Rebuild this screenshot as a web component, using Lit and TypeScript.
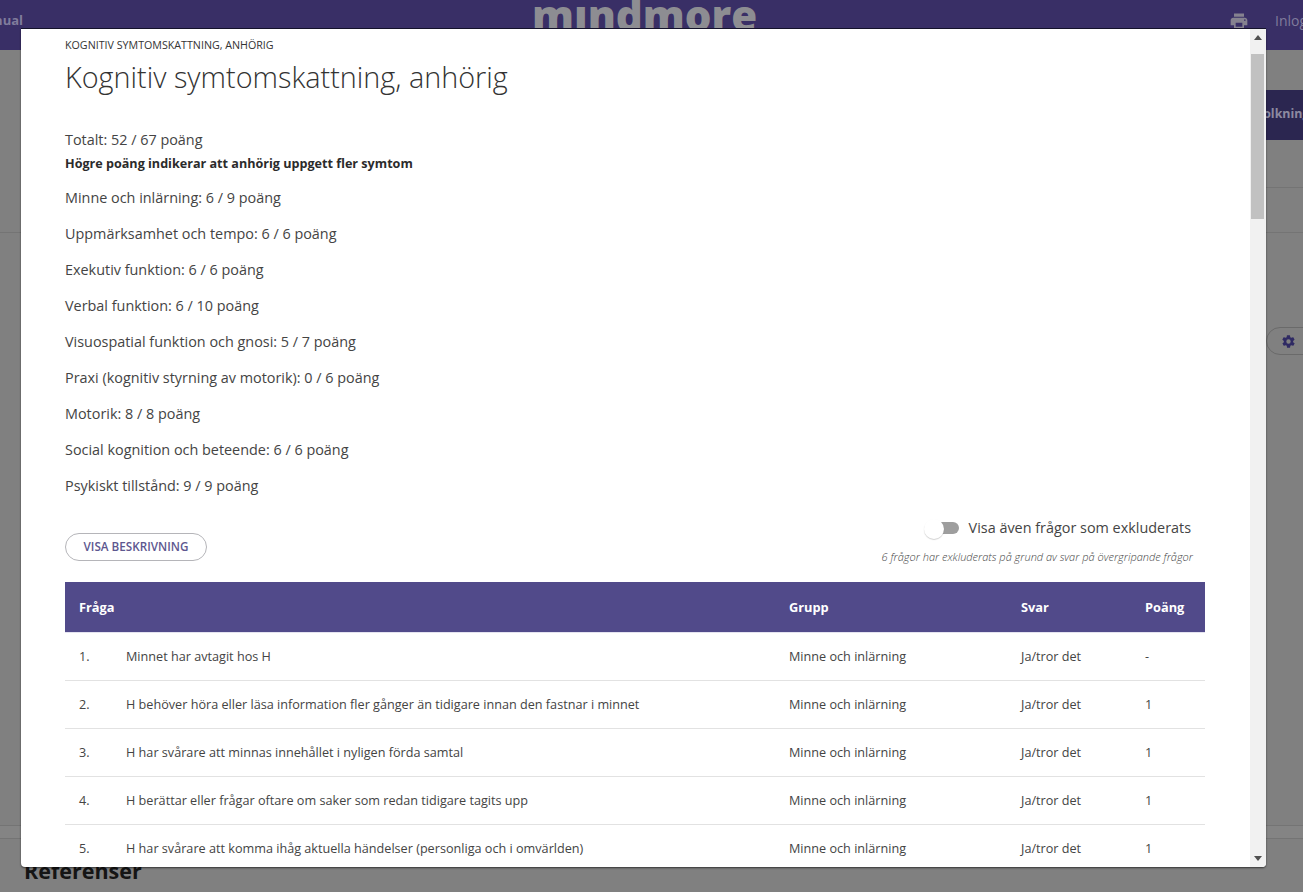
import { LitElement, html, css } from "lit";
import { customElement } from "lit/decorators.js";

const scores = [
  "Minne och inlärning: 6 / 9 poäng",
  "Uppmärksamhet och tempo: 6 / 6 poäng",
  "Exekutiv funktion: 6 / 6 poäng",
  "Verbal funktion: 6 / 10 poäng",
  "Visuospatial funktion och gnosi: 5 / 7 poäng",
  "Praxi (kognitiv styrning av motorik): 0 / 6 poäng",
  "Motorik: 8 / 8 poäng",
  "Social kognition och beteende: 6 / 6 poäng",
  "Psykiskt tillstånd: 9 / 9 poäng",
];
const rows = [
  ["1.", "Minnet har avtagit hos H", "-"],
  ["2.", "H behöver höra eller läsa information fler gånger än tidigare innan den fastnar i minnet", "1"],
  ["3.", "H har svårare att minnas innehållet i nyligen förda samtal", "1"],
  ["4.", "H berättar eller frågar oftare om saker som redan tidigare tagits upp", "1"],
  ["5.", "H har svårare att komma ihåg aktuella händelser (personliga och i omvärlden)", "1"],
];

@customElement("app-root")
export class AppRoot extends LitElement {
  static styles = css`
    :host { display: block; position: relative; height: 892px; overflow: hidden; background: #808080; font-family: "Open Sans", sans-serif; color: #333; }
    .page { height: 892px; display: flex; flex-direction: column; overflow: hidden; }
    .hdr { height: 50px; flex: none; background: #392f66; display: flex; align-items: flex-start; justify-content: space-between; color: #807c9c; position: relative; overflow: hidden; }
    .manual { font-size: 13px; font-weight: 700; line-height: 40px; margin-left: -26px; }
    .logo { position: absolute; left: 532px; top: -17px; font-weight: 800; font-size: 42px; line-height: 64px; color: #8d8d92; }
    .hdr-right { display: flex; align-items: flex-start; margin-right: -12px; }
    .printer { margin: 11px 26px 0 0; }
    .login { font-size: 14px; line-height: 42px; width: 40px; white-space: nowrap; }
    .band1 { height: 40px; flex: none; }
    .tabs { height: 51px; flex: none; display: flex; justify-content: flex-end; }
    .active { width: 47px; height: 50px; background: #2b2650; color: #8d8aa0; font-size: 12.4px; font-weight: 700; line-height: 48px; white-space: nowrap; overflow: hidden; box-sizing: border-box; }
    .band2 { height: 47px; flex: none; display: flex; justify-content: flex-end; }
    .rule { width: 47px; border-bottom: 1px solid #747474; }
    .band3 { height: 44px; flex: none; border-bottom: 1px solid #747474; }
    .gear-row { height: 122px; flex: none; display: flex; align-items: flex-end; justify-content: flex-end; }
    .gear { width: 60px; height: 28px; margin-right: -23px; border: 1px solid #6a6a6a; border-radius: 14px; display: flex; align-items: center; padding-left: 14px; box-sizing: border-box; }
    .fill { flex: 1; border-bottom: 1px solid #747474; }
    .band4 { height: 12px; flex: none; border-bottom: 1px solid #747474; background: #848484; }
    .refs { flex: none; font-size: 21.5px; font-weight: 700; color: #151515; line-height: 30px; padding: 17px 0 6px 24px; }

    .modal { position: absolute; left: 21px; top: 29px; width: 1245px; height: 838px; background: #fff; display: flex; border-radius: 0 0 4px 4px; box-shadow: 0 -1px 0 #14122a, 0 1px 2px rgba(0,0,0,.6); overflow: hidden; }
    .content { flex: 1; min-width: 0; overflow: hidden; padding: 8px 45px 0 44px; }
    .eyebrow { font-size: 10.7px; line-height: 16px; text-transform: uppercase; color: #333; }
    h1 { margin: 2px 0 0; font-size: 28.8px; font-weight: 300; line-height: 44px; color: #333; }
    .summary { margin-top: 31px; font-size: 14.4px; line-height: 20px; color: #444; }
    .note { font-size: 12.6px; font-weight: 700; line-height: 20px; margin-top: 4px; color: #2b2b2b; }
    .score { margin-top: 16px; }
    .note + .score { margin-top: 14px; }
    .actions { display: flex; justify-content: space-between; align-items: flex-end; margin-top: 22px; }
    .pill { width: 142px; height: 28px; box-sizing: border-box; border: 1px solid #b5b5b9; border-radius: 14px; background: #fff; color: #5d578f; font: 600 11.7px/25px "Open Sans", sans-serif; text-transform: uppercase; padding: 0 0 1px; margin-bottom: 4px; }
    .opts { display: flex; flex-direction: column; align-items: flex-end; }
    .toggle-row { display: flex; align-items: center; gap: 10px; font-size: 14.4px; line-height: 20px; color: #444; margin-right: 14px; }
    .toggle { position: relative; width: 28px; height: 12px; border-radius: 6px; background: #9e9e9e; }
    .knob { position: absolute; left: -7px; top: -3px; width: 20px; height: 20px; border-radius: 50%; background: #fff; box-shadow: 0 1px 1px rgba(0,0,0,.18); }
    .excl { font-size: 11px; font-style: italic; font-weight: 300; line-height: 16px; color: #444; margin: 11px 12px 0 0; }
    table { margin-top: 17px; width: 1140px; border-collapse: collapse; table-layout: fixed; font-size: 12.65px; }
    th { background: #514a8a; color: #fff; height: 50px; padding: 0; text-align: left; font-size: 12.8px; font-weight: 700; border-bottom: 1px solid #e4e3f0; }
    td { height: 45px; padding: 0 0 2px; border-bottom: 1px solid #e2e2e2; color: #444; }
    .c0 { padding-left: 14px; }
    .scrollbar { width: 16px; flex: none; background: #f1f1f1; position: relative; }
    .thumb { position: absolute; left: 1px; top: 25px; width: 13px; height: 165px; background: #c1c1c1; }
    .arrow { position: absolute; left: 4px; }
    .up { top: 6px; }
    .down { bottom: 6px; }
  `;

  render() {
    return html`
      <div class="page">
        <div class="hdr">
          <div class="manual">Manual</div>
          <div class="logo">mındmore</div>
          <div class="hdr-right">
            <svg class="printer" width="20" height="20" viewBox="0 0 24 24" fill="#85828f"><path d="M19 8H5c-1.66 0-3 1.34-3 3v6h4v4h12v-4h4v-6c0-1.66-1.34-3-3-3zm-3 11H8v-5h8v5zm3-7c-.55 0-1-.45-1-1s.45-1 1-1 1 .45 1 1-.45 1-1 1zm-1-9H6v4h12V3z"/></svg>
            <div class="login">Inloggad</div>
          </div>
        </div>
        <div class="band1"></div>
        <div class="tabs"><div class="active">Tolkning</div></div>
        <div class="band2"><div class="rule"></div></div>
        <div class="band3"></div>
        <div class="gear-row">
          <div class="gear"><svg width="15" height="15" viewBox="0 0 24 24" fill="#2f2a63"><path d="M19.4 13c.04-.33.06-.66.06-1s-.02-.67-.06-1l2.1-1.63a.5.5 0 0 0 .12-.64l-2-3.46a.5.5 0 0 0-.61-.22l-2.49 1a7.3 7.3 0 0 0-1.73-1l-.38-2.65A.5.5 0 0 0 13.9 2h-4a.5.5 0 0 0-.49.42l-.38 2.65c-.62.25-1.2.6-1.73 1l-2.49-1a.5.5 0 0 0-.61.22l-2 3.46a.5.5 0 0 0 .12.64L4.6 11c-.04.33-.07.67-.07 1s.03.67.07 1l-2.1 1.63a.5.5 0 0 0-.12.64l2 3.46c.12.22.39.3.61.22l2.49-1c.53.4 1.11.75 1.73 1l.38 2.65c.04.24.25.42.49.42h4c.24 0 .45-.18.49-.42l.38-2.65c.62-.25 1.2-.6 1.73-1l2.49 1c.22.08.49 0 .61-.22l2-3.46a.5.5 0 0 0-.12-.64L19.4 13zM12 15.5a3.5 3.5 0 1 1 0-7 3.5 3.5 0 0 1 0 7z"/></svg></div>
        </div>
        <div class="fill"></div>
        <div class="band4"></div>
        <div class="refs">Referenser</div>
      </div>

      <div class="modal">
        <div class="content">
          <div class="eyebrow">Kognitiv symtomskattning, anhörig</div>
          <h1>Kognitiv symtomskattning, anhörig</h1>
          <div class="summary">
            <div>Totalt: 52 / 67 poäng</div>
            <div class="note">Högre poäng indikerar att anhörig uppgett fler symtom</div>
            ${scores.map((s) => html`<div class="score">${s}</div>`)}
          </div>
          <div class="actions">
            <button class="pill">Visa beskrivning</button>
            <div class="opts">
              <div class="toggle-row"><span class="toggle"><span class="knob"></span></span>Visa även frågor som exkluderats</div>
              <div class="excl">6 frågor har exkluderats på grund av svar på övergripande frågor</div>
            </div>
          </div>
          <table>
            <colgroup><col style="width:61px" /><col style="width:663px" /><col style="width:232px" /><col style="width:124px" /><col style="width:60px" /></colgroup>
            <thead><tr><th class="c0" colspan="2">Fråga</th><th>Grupp</th><th>Svar</th><th>Poäng</th></tr></thead>
            <tbody>
              ${rows.map((r) => html`<tr><td class="c0">${r[0]}</td><td>${r[1]}</td><td>Minne och inlärning</td><td>Ja/tror det</td><td>${r[2]}</td></tr>`)}
            </tbody>
          </table>
        </div>
        <div class="scrollbar">
          <svg class="arrow up" width="8" height="5" viewBox="0 0 8 5" fill="#505050"><path d="M4 0l4 5H0z"/></svg>
          <div class="thumb"></div>
          <svg class="arrow down" width="8" height="5" viewBox="0 0 8 5" fill="#505050"><path d="M0 0h8L4 5z"/></svg>
        </div>
      </div>
    `;
  }
}
